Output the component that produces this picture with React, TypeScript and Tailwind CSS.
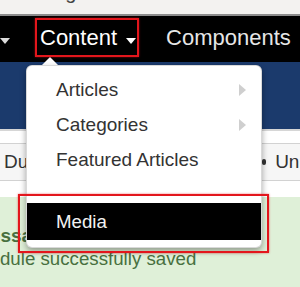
import React from "react";

const font = { fontFamily: '"Liberation Sans", Arial, sans-serif' };

function Chevron() {
  return (
    <span className="ml-auto mt-[1px] h-0 w-0 border-y-[6px] border-l-[7px] border-y-transparent border-l-[#cfcfcf]" />
  );
}

export default function App() {
  return (
    <div
      className="relative h-[287px] w-[300px] overflow-hidden bg-white"
      style={font}
    >
      {/* Top strip with cut-off site title */}
      <div className="h-[16px] overflow-hidden border-b-[2px] border-[#8c8c8c] bg-[#f3f2f0]">
        <div className="-ml-[6px] -mt-[18px] text-[20px] leading-[20px] text-[#444]">
          elearningsewa .
        </div>
      </div>

      {/* Nav bar */}
      <div className="flex h-[46px] items-start bg-black">
        <span className="mt-[22px] h-0 w-0 border-x-[5px] border-t-[6px] border-x-transparent border-t-[#dcdcdc]" />
        <span className="ml-[30px] pt-[11px] text-[22px] leading-[22px] text-white">
          Content
        </span>
        <span className="ml-[9px] mt-[22px] h-0 w-0 border-x-[5.5px] border-t-[6px] border-x-transparent border-t-white" />
        <span className="ml-[30px] whitespace-nowrap pt-[11px] text-[22px] leading-[22px] text-[#e6e6e6]">
          Components
        </span>
      </div>

      {/* Blue header */}
      <div className="h-[67px] bg-[#1b3a6c]" />

      {/* Toolbar */}
      <div className="h-[68px] border-t-[2px] border-[#d6d6d6] bg-white">
        <div className="mt-[12px] flex h-[38px] items-center border-y border-[#d2d2d2] bg-[#f6f6f6] text-[19px] text-[#333]">
          <span className="ml-[4px]">Du</span>
          <span className="ml-auto mr-[9px] h-[6px] w-[4px] rounded-sm bg-[#333]" />
          <span className="mr-[-10px]">Unp</span>
        </div>
      </div>

      {/* Success message */}
      <div className="h-[90px] bg-[#dff0d8] pt-[27px] text-[#48703f]">
        <div className="-ml-[26px] whitespace-nowrap text-[19px] font-bold leading-[23px]">
          Message
        </div>
        <div className="-ml-[26px] whitespace-nowrap text-[18.7px] leading-[23px]">
          Module successfully saved
        </div>
      </div>

      {/* Dropdown caret */}
      <span className="absolute left-[42px] top-[57px] h-0 w-0 border-x-[8px] border-b-[8px] border-x-transparent border-b-white" />

      {/* Dropdown menu */}
      <div className="absolute left-[26px] top-[65px] w-[236px] overflow-hidden rounded-[6px] border border-[rgba(0,0,0,0.15)] bg-white pb-[7px] pt-[6px] shadow-[0_3px_6px_rgba(0,0,0,0.35)]">
        <div className="flex items-center pl-[29px] pr-[15px] text-[19px] leading-[35px] text-[#333]">
          Articles
          <Chevron />
        </div>
        <div className="flex items-center pl-[29px] pr-[15px] text-[19px] leading-[35px] text-[#333]">
          Categories
          <Chevron />
        </div>
        <div className="flex items-center pl-[29px] pr-[15px] text-[19px] leading-[35px] text-[#333]">
          Featured Articles
        </div>
        <div className="h-[26px]" />
        <div className="bg-black pl-[29px] text-[18.7px] leading-[37px] text-[#f2f2f2]">
          Media
        </div>
      </div>

      {/* Red annotation boxes */}
      <div className="absolute left-[35px] top-[18px] h-[39px] w-[104px] border-[2.5px] border-[#e3161c] shadow-[0_0_2px_rgba(227,22,28,0.6)]" />
      <div className="absolute left-[18px] top-[194px] h-[59px] w-[251px] border-[2.5px] border-[#e3161c] shadow-[0_0_2px_rgba(227,22,28,0.6)]" />
    </div>
  );
}
